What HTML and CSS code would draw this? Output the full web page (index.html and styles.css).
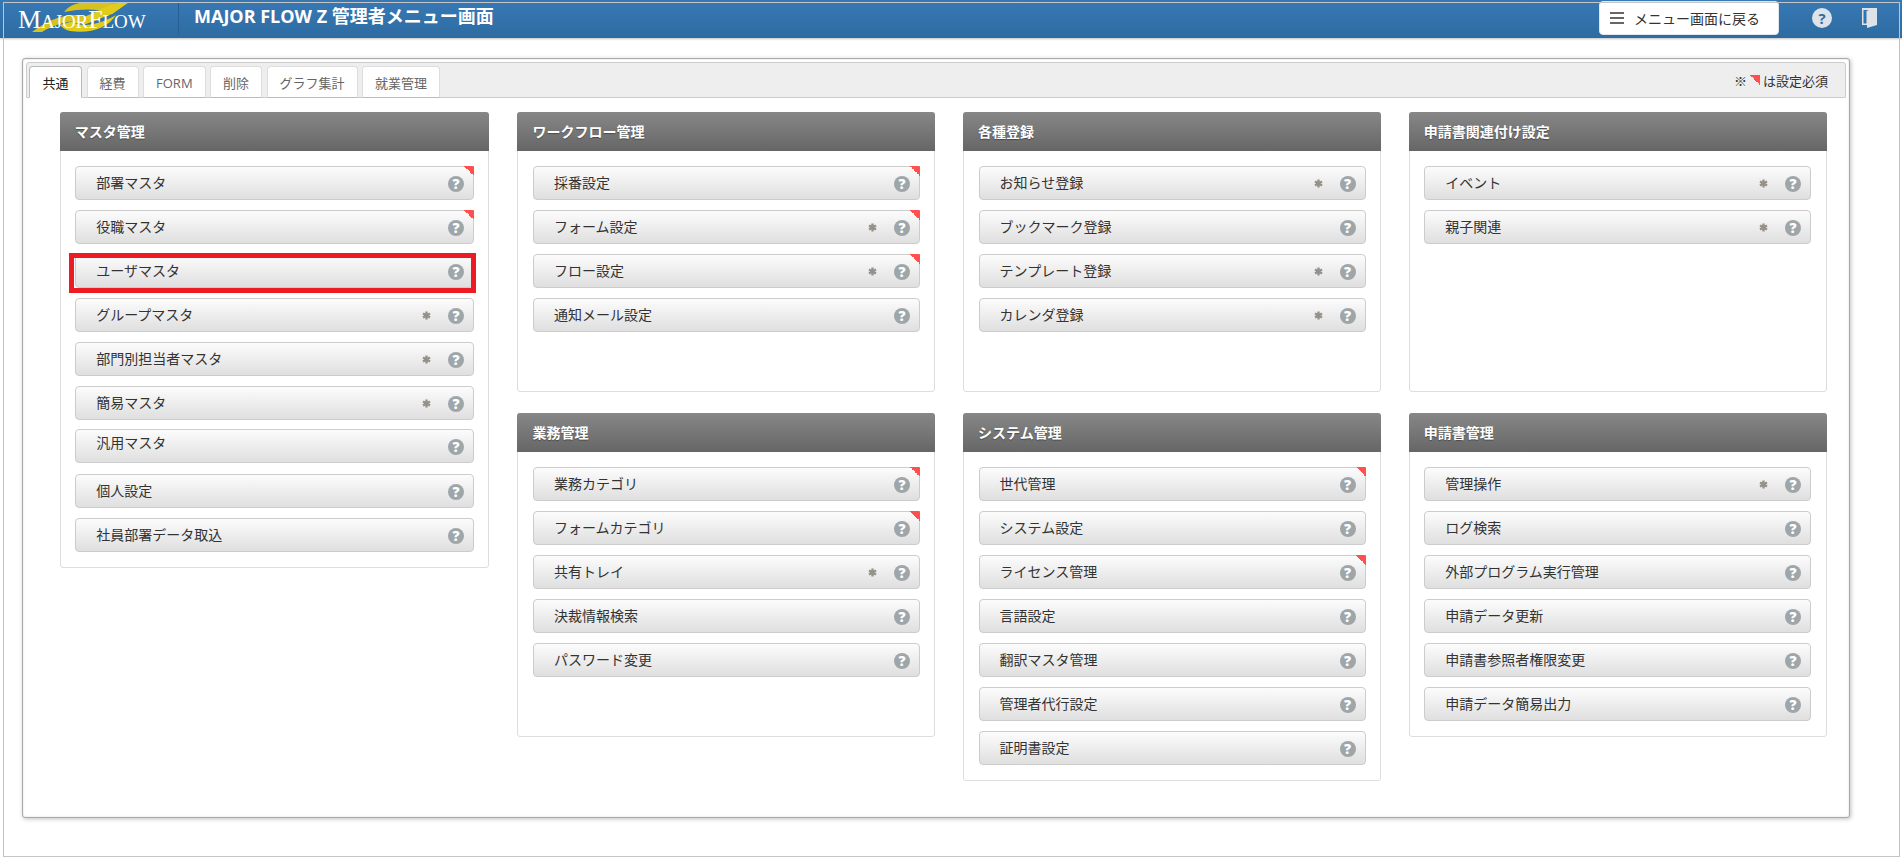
FILE: index.html
```html
<!DOCTYPE html>
<html lang="ja">
<head>
<meta charset="utf-8">
<title>MAJOR FLOW Z 管理者メニュー画面</title>
<link rel="stylesheet" href="styles.css">
</head>
<body>
<svg class="defs" width="0" height="0" aria-hidden="true">
  <symbol id="star" viewBox="0 0 10 10">
    <path d="M5 .5v9M1.100 2.750l7.800 4.500M8.900 2.750l-7.800 4.500" fill="none" stroke="currentColor" stroke-width="2.600"/>
  </symbol>
</svg>
<header class="topbar">
  <div class="logo">
    <svg class="swoosh" viewBox="0 0 150 38" aria-hidden="true">
      <path d="M64 12C70 4 80 2 92 2C105 3 118 4 129 2L112 14C100 9 85 8 64 12Z" fill="#d6c21f"/>
      <path d="M129 2L112 14L86 24L74 23C85 27 98 25 116 15C108 28 90 34 70 31C65 30 62 27 60 25C76 21 92 14 112 4Z" fill="#e2cc1a"/>
      <path d="M32 32C45 22 60 15 75 15C81 15 86 17 91 21C76 19 56 23 42 32Z" fill="#d8c21c"/>
    </svg>
    <span class="logo-text"><span class="logo-cap">M</span>AJOR<span class="logo-cap">F</span>LOW</span>
  </div>
  <h1 class="title">MAJOR FLOW Z 管理者メニュー画面</h1>
  <div class="top-actions">
    <a class="back-btn"><span class="burger"></span>メニュー画面に戻る</a>
    <span class="top-help">?</span>
    <svg class="door" viewBox="0 0 15 20" aria-hidden="true">
      <path fill-rule="evenodd" d="M0 0H15V17L5 20V17H0ZM1.500 2V15.500H4.500V3L7 2Z" fill="#dde3e8"/>
    </svg>
  </div>
</header>

<main class="panel">
  <div class="tabbar">
    <a class="tab active">共通</a>
    <a class="tab">経費</a>
    <a class="tab">FORM</a>
    <a class="tab">削除</a>
    <a class="tab">グラフ集計</a>
    <a class="tab">就業管理</a>
    <span class="legend">※ <i class="legend-mark"></i> は設定必須</span>
  </div>
  <div class="columns">
    <div class="col col-wide">
      <section class="card">
        <h2 class="card-head">マスタ管理</h2>
        <div class="card-body">
          <a class="item req"><span class="label">部署マスタ</span><span class="help">?</span></a>
          <a class="item req"><span class="label">役職マスタ</span><span class="help">?</span></a>
          <a class="item marked"><span class="label">ユーザマスタ</span><span class="help">?</span></a>
          <a class="item"><span class="label">グループマスタ</span><svg class="star"><use href="#star"/></svg><span class="help">?</span></a>
          <a class="item"><span class="label">部門別担当者マスタ</span><svg class="star"><use href="#star"/></svg><span class="help">?</span></a>
          <a class="item tight"><span class="label">簡易マスタ</span><svg class="star"><use href="#star"/></svg><span class="help">?</span></a>
          <a class="item loose raised"><span class="label">汎用マスタ</span><span class="help">?</span></a>
          <a class="item"><span class="label">個人設定</span><span class="help">?</span></a>
          <a class="item"><span class="label">社員部署データ取込</span><span class="help">?</span></a>
        </div>
      </section>
    </div>
    <div class="col">
      <section class="card card-top">
        <h2 class="card-head">ワークフロー管理</h2>
        <div class="card-body">
          <a class="item req"><span class="label">採番設定</span><span class="help">?</span></a>
          <a class="item req"><span class="label">フォーム設定</span><svg class="star"><use href="#star"/></svg><span class="help">?</span></a>
          <a class="item req"><span class="label">フロー設定</span><svg class="star"><use href="#star"/></svg><span class="help">?</span></a>
          <a class="item"><span class="label">通知メール設定</span><span class="help">?</span></a>
        </div>
      </section>
      <section class="card card-low">
        <h2 class="card-head">業務管理</h2>
        <div class="card-body">
          <a class="item req"><span class="label">業務カテゴリ</span><span class="help">?</span></a>
          <a class="item req"><span class="label">フォームカテゴリ</span><span class="help">?</span></a>
          <a class="item"><span class="label">共有トレイ</span><svg class="star"><use href="#star"/></svg><span class="help">?</span></a>
          <a class="item"><span class="label">決裁情報検索</span><span class="help">?</span></a>
          <a class="item"><span class="label">パスワード変更</span><span class="help">?</span></a>
        </div>
      </section>
    </div>
    <div class="col">
      <section class="card card-top">
        <h2 class="card-head">各種登録</h2>
        <div class="card-body">
          <a class="item"><span class="label">お知らせ登録</span><svg class="star"><use href="#star"/></svg><span class="help">?</span></a>
          <a class="item"><span class="label">ブックマーク登録</span><span class="help">?</span></a>
          <a class="item"><span class="label">テンプレート登録</span><svg class="star"><use href="#star"/></svg><span class="help">?</span></a>
          <a class="item"><span class="label">カレンダ登録</span><svg class="star"><use href="#star"/></svg><span class="help">?</span></a>
        </div>
      </section>
      <section class="card card-low">
        <h2 class="card-head">システム管理</h2>
        <div class="card-body">
          <a class="item req"><span class="label">世代管理</span><span class="help">?</span></a>
          <a class="item"><span class="label">システム設定</span><span class="help">?</span></a>
          <a class="item req"><span class="label">ライセンス管理</span><span class="help">?</span></a>
          <a class="item"><span class="label">言語設定</span><span class="help">?</span></a>
          <a class="item"><span class="label">翻訳マスタ管理</span><span class="help">?</span></a>
          <a class="item"><span class="label">管理者代行設定</span><span class="help">?</span></a>
          <a class="item"><span class="label">証明書設定</span><span class="help">?</span></a>
        </div>
      </section>
    </div>
    <div class="col">
      <section class="card card-top">
        <h2 class="card-head">申請書関連付け設定</h2>
        <div class="card-body">
          <a class="item"><span class="label">イベント</span><svg class="star"><use href="#star"/></svg><span class="help">?</span></a>
          <a class="item"><span class="label">親子関連</span><svg class="star"><use href="#star"/></svg><span class="help">?</span></a>
        </div>
      </section>
      <section class="card card-low">
        <h2 class="card-head">申請書管理</h2>
        <div class="card-body">
          <a class="item"><span class="label">管理操作</span><svg class="star"><use href="#star"/></svg><span class="help">?</span></a>
          <a class="item"><span class="label">ログ検索</span><span class="help">?</span></a>
          <a class="item"><span class="label">外部プログラム実行管理</span><span class="help">?</span></a>
          <a class="item"><span class="label">申請データ更新</span><span class="help">?</span></a>
          <a class="item"><span class="label">申請書参照者権限変更</span><span class="help">?</span></a>
          <a class="item"><span class="label">申請データ簡易出力</span><span class="help">?</span></a>
        </div>
      </section>
    </div>
  </div>
</main>
</body>
</html>
```
FILE: styles.css
```css
* { box-sizing: border-box; }
html { overflow: hidden; }
body {
  margin: 0;
  height: 859px;
  overflow: hidden;
  background: #fff;
  color: #333;
  font-family: "Open Sans", "Noto Sans CJK JP", sans-serif;
  font-size: 14px;
  position: relative;
}
body::after {
  content: "";
  position: absolute;
  left: 3px; top: 2px; right: 2px; bottom: 2px;
  border: 1px solid #c4c4c4;
  pointer-events: none;
}
.defs { position: absolute; }

.topbar {
  height: 38px;
  display: flex;
  align-items: stretch;
  background: linear-gradient(#3779b6, #2e6ba1);
  box-shadow: 0 1px 2px rgba(0,0,0,.25);
}
.logo {
  position: relative;
  width: 179px;
  height: 32px;
  margin-top: 2px;
  border-right: 1px solid #265f93;
}
.swoosh {
  position: absolute;
  left: 0; top: -2px;
  width: 150px; height: 38px;
}
.logo-text {
  position: absolute;
  left: 18px; top: 7px;
  font-family: "Liberation Serif", serif;
  font-size: 19px;
  line-height: 22px;
  letter-spacing: -.1px;
  color: #fff;
  white-space: nowrap;
}
.logo-cap { font-size: 26px; }
.title {
  margin: 0;
  padding-left: 15px;
  font-size: 18px;
  font-weight: 700;
  line-height: 32px;
  color: #fff;
  white-space: nowrap;
}
.top-actions {
  margin-left: auto;
  display: flex;
  align-items: flex-start;
}
.back-btn {
  display: flex;
  align-items: center;
  width: 180px;
  height: 34px;
  margin-top: 1px;
  padding-left: 10px;
  background: #fff;
  border: 1px solid #dfe6ec;
  border-radius: 4px;
  font-size: 14px;
  color: #333;
  white-space: nowrap;
}
.burger {
  width: 14px;
  height: 12px;
  margin-right: 10px;
  border-top: 2px solid #666;
  border-bottom: 2px solid #666;
  background: linear-gradient(#666, #666) center / 100% 2px no-repeat;
}
.top-help {
  width: 20px; height: 20px;
  margin: 8px 0 0 33px;
  border-radius: 50%;
  background: #dde3e8;
  color: #2f6ea6;
  font-size: 15px;
  font-weight: 700;
  line-height: 20px;
  text-align: center;
}
.door {
  width: 15px; height: 20px;
  margin: 8px 25px 0 30px;
}

.panel {
  width: 1828px;
  height: 760px;
  margin: 20px 0 0 22px;
  padding: 3px;
  background: #fff;
  border: 1px solid #aaa;
  border-radius: 3px;
  box-shadow: 1px 1px 4px rgba(0,0,0,.25), inset 0 0 2px rgba(0,0,0,.18);
}
.tabbar {
  height: 36px;
  display: flex;
  align-items: flex-end;
  gap: 4.500px;
  padding: 0 17px 0 2px;
  background: #eee;
  border: 1px solid #ccc;
  border-radius: 3px 3px 0 0;
}
.tab {
  height: 32px;
  margin-bottom: -1px;
  padding: 0 12px;
  background: #fff;
  border: 1px solid #ddd;
  border-bottom-color: #bbb;
  border-radius: 4px 4px 0 0;
  font-size: 13px;
  line-height: 32px;
  color: #666;
  white-space: nowrap;
}
.tab.active {
  padding: 0 12.500px;
  color: #222;
  border-color: #bbb;
  border-bottom-color: #fff;
}
.legend {
  margin-left: auto;
  align-self: center;
  display: flex;
  align-items: center;
  gap: 3px;
  font-size: 13px;
  color: #333;
}
.legend-mark {
  width: 10px; height: 10px;
  background: linear-gradient(to top right, transparent 50%, #ff5050 50%);
}

.columns {
  display: flex;
  align-items: flex-start;
  gap: 27.600px;
  padding: 14px 0 0 33.700px;
}
.col {
  width: 418px;
  display: flex;
  flex-direction: column;
  gap: 21px;
}
.col-wide {
  width: 429.800px;
  margin-right: .400px;
}
.card {
  background: #fff;
  border: 1px solid #ddd;
  border-radius: 3px;
  padding-bottom: 15px;
}
.card-top { height: 280px; }
.card-low { min-height: 324px; }
.card-head {
  margin: -1px -1px 0;
  height: 39px;
  padding-left: 15px;
  background: linear-gradient(#878787, #666);
  border-radius: 3px 3px 0 0;
  font-size: 14px;
  font-weight: 700;
  line-height: 39px;
  color: #fff;
  text-shadow: 0 1px 1px rgba(0,0,0,.35);
}
.card-body {
  padding: 15px 14.500px 0;
  display: flex;
  flex-direction: column;
  gap: 10px;
}
.item {
  position: relative;
  flex: none;
  display: flex;
  align-items: center;
  height: 34px;
  padding: 0 9px 0 20px;
  background: linear-gradient(#fcfcfc, #dfdfdf);
  border: 1px solid #ccc;
  border-radius: 4px;
  color: #333;
}
.item.req::before {
  content: "";
  position: absolute;
  top: -1px; right: -1px;
  width: 10px; height: 10px;
  background: linear-gradient(to top right, transparent 50%, #ff5050 50%);
  border-top-right-radius: 1px;
}
.item.marked::after {
  content: "";
  position: absolute;
  left: -7px; top: -2px; right: -3px; bottom: -6px;
  border: 5px solid #ed1c24;
}
.item.tight { margin-bottom: -1px; }
.item.loose { margin-bottom: 1px; }
.item.raised .label { margin-top: -7px; }
.label {
  flex: 1;
  font-size: 14px;
  line-height: 20px;
  white-space: nowrap;
}
.star {
  width: 9px; height: 9px;
  margin-right: 17px;
  color: #95918a;
}
.help {
  width: 16px; height: 16px;
  margin-top: 2px;
  border-radius: 50%;
  background: #9fa6aa;
  color: #fff;
  font-size: 14px;
  font-weight: 800;
  line-height: 16px;
  text-align: center;
}
```
